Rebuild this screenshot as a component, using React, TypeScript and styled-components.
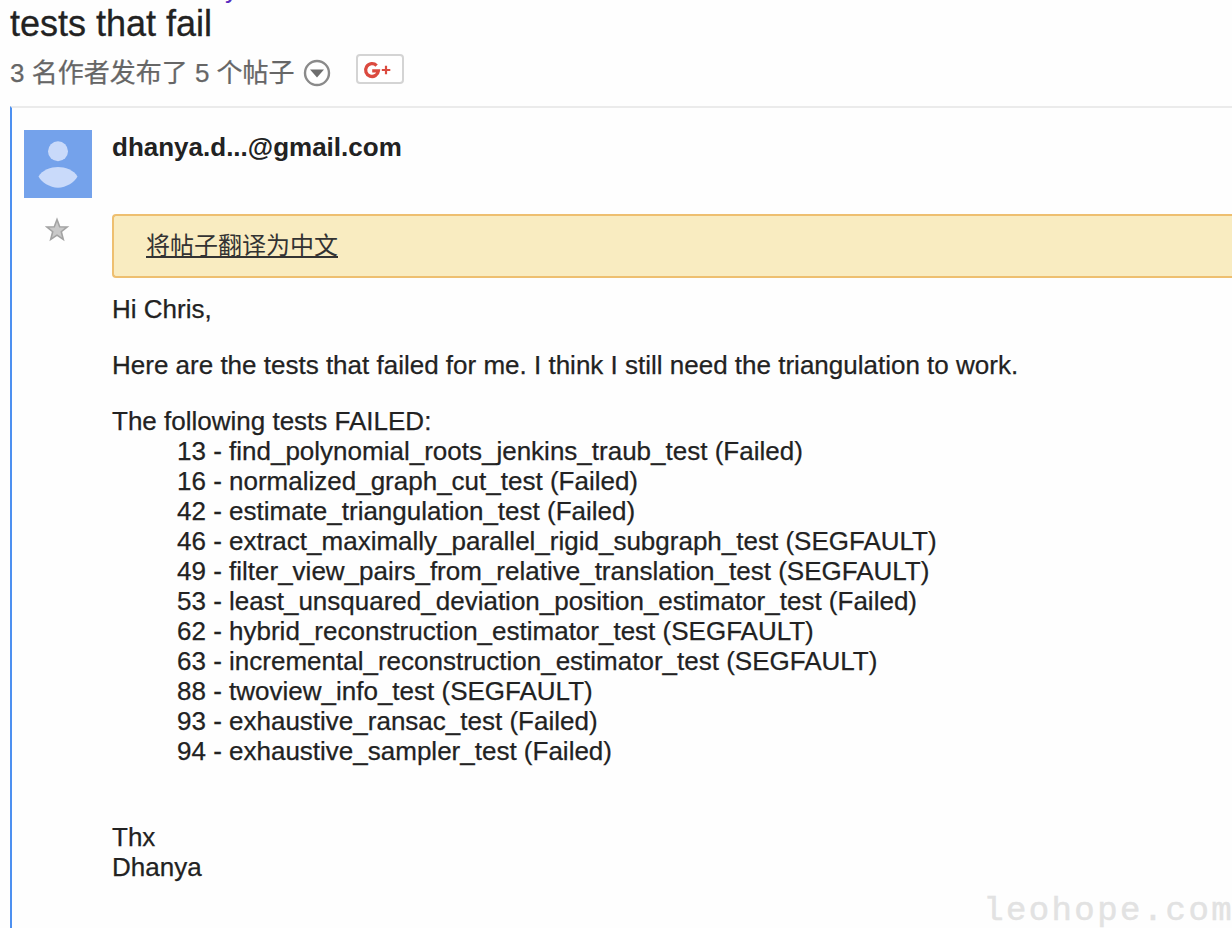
import React from "react";
import styled, { createGlobalStyle } from "styled-components";

const Global = createGlobalStyle`
  html, body { margin: 0; background: #fefefe; }
  body {
    height: 928px;
    overflow: hidden;
    color: #222;
    font-family: "Liberation Sans", Arial, "Noto Sans CJK SC", sans-serif;
    font-size: 26px;
    line-height: 30px;
  }
`;

const Page = styled.div`
  position: relative;
  display: flex;
  flex-direction: column;
  width: 1232px;
  height: 928px;
  overflow: hidden;
`;

const Crumb = styled.div`
  height: 4px;
  padding-left: 225px;
  display: flex;
  align-items: flex-end;
  overflow: hidden;
  color: #5a2bc0;
`;

const Title = styled.h1`
  margin: 0;
  padding-left: 10px;
  height: 40px;
  font-size: 36px;
  font-weight: 400;
  line-height: 40px;
  -webkit-text-stroke: 0.3px #222;
`;

const Meta = styled.div`
  display: flex;
  align-items: center;
  height: 62px;
  padding: 0 0 4px 10px;
  box-sizing: border-box;
  color: #666;
  -webkit-text-stroke: 0.25px #666;
`;

const Count = styled.span`
  white-space: pre;
  width: 293px;
`;

const PlusButton = styled.button`
  display: flex;
  align-items: center;
  width: 48px;
  height: 30px;
  margin: 0 0 8px 25px;
  padding: 1px 0 0 5px;
  box-sizing: border-box;
  border: 2px solid #d4d4d4;
  border-radius: 4px;
  background: #fff;
`;

const Thread = styled.main`
  display: flex;
  flex: 1;
  margin-left: 10px;
  padding-top: 22px;
  border-top: 2px solid #ebebeb;
  border-left: 2px solid #4d90f0;
`;

const Side = styled.aside`
  display: flex;
  flex-direction: column;
  align-items: center;
  gap: 19px;
  width: 68px;
  margin: 0 20px 0 12px;
`;

const Message = styled.article`
  flex: 1;
`;

const Author = styled.div`
  height: 84px;
  padding-top: 2px;
  box-sizing: border-box;
  font-weight: 700;
`;

const TranslateBar = styled.div`
  display: flex;
  align-items: center;
  height: 64px;
  box-sizing: border-box;
  padding-left: 32px;
  border: 2px solid #eebf70;
  border-right: 0;
  border-radius: 4px 0 0 4px;
  background: #f9ecc1;
`;

const TranslateLink = styled.a`
  color: #333;
  font-size: 24px;
  text-decoration: underline;
  text-decoration-thickness: 2px;
  text-underline-offset: 2px;
  text-decoration-skip-ink: none;
`;

const Body = styled.div`
  padding-top: 16px;
  -webkit-text-stroke: 0.25px #222;
`;

const Paragraph = styled.p<{ $gap?: number }>`
  margin: 0 0 ${(p) => p.$gap ?? 26}px;
  white-space: nowrap;
`;

const TestList = styled.ul`
  margin: 0 0 56px;
  padding: 0 0 0 65px;
  list-style: none;
  white-space: nowrap;
`;

const Watermark = styled.div`
  position: absolute;
  right: -2px;
  bottom: -3px;
  color: #e2e2e2;
  font: 34px/40px "Liberation Mono", monospace;
  letter-spacing: 2.4px;
  -webkit-text-stroke: 0.5px #e2e2e2;
`;

const tests = [
  "13 - find_polynomial_roots_jenkins_traub_test (Failed)",
  "16 - normalized_graph_cut_test (Failed)",
  "42 - estimate_triangulation_test (Failed)",
  "46 - extract_maximally_parallel_rigid_subgraph_test (SEGFAULT)",
  "49 - filter_view_pairs_from_relative_translation_test (SEGFAULT)",
  "53 - least_unsquared_deviation_position_estimator_test (Failed)",
  "62 - hybrid_reconstruction_estimator_test (SEGFAULT)",
  "63 - incremental_reconstruction_estimator_test (SEGFAULT)",
  "88 - twoview_info_test (SEGFAULT)",
  "93 - exhaustive_ransac_test (Failed)",
  "94 - exhaustive_sampler_test (Failed)",
];

const MenuIcon = () => (
  <svg width="28" height="28" viewBox="0 0 28 28">
    <circle cx="14" cy="14" r="12" fill="#fff" stroke="#8a8a8a" strokeWidth="2.4" />
    <path d="M7 10.5h14l-7 8z" fill="#6d6d6d" />
  </svg>
);

const PlusIcon = () => (
  <svg width="30" height="18" viewBox="0 0 30 18">
    <path d="M13.6 4.6A6.4 6.4 0 1 0 15.4 9.8H9.2" fill="none" stroke="#db4a3f" strokeWidth="3.3" />
    <path d="M23 4.7v8.500M18.800 9h8.500" stroke="#db4a3f" strokeWidth="2.200" />
  </svg>
);

const Avatar = () => (
  <svg width="68" height="68" viewBox="0 0 68 68">
    <path d="M0 0h68v68H0z" fill="#74a2eb" />
    <circle cx="34" cy="21.3" r="10" fill="#c9dafa" />
    <path d="M14.5 46.5C18 40 27 37 34 37s16 3 19.5 9.5C51 52 42 57.700 34 57.700S17 52 14.500 46.500z" fill="#c9dafa" />
  </svg>
);

const Star = () => (
  <svg width="26" height="26" viewBox="0 0 26 26">
    <path d="M12 2.5l2.7 7.2 7.5.3-5.9 4.700 2 7.800-6.300-4.300-6.300 4.300 2-7.800L1.800 10l7.500-.3z" fill="#c9c9c9" stroke="#a3a3a3" strokeWidth="1.600" />
  </svg>
);

export default function App() {
  return (
    <Page>
      <Global />
      <Crumb>y</Crumb>
      <Title>tests that fail</Title>
      <Meta>
        <Count>3 名作者发布了 5 个帖子</Count>
        <MenuIcon />
        <PlusButton aria-label="G+">
          <PlusIcon />
        </PlusButton>
      </Meta>
      <Thread>
        <Side>
          <Avatar />
          <Star />
        </Side>
        <Message>
          <Author>dhanya.d...@gmail.com</Author>
          <TranslateBar>
            <TranslateLink>将帖子翻译为中文</TranslateLink>
          </TranslateBar>
          <Body>
            <Paragraph>Hi Chris,</Paragraph>
            <Paragraph>
              Here are the tests that failed for me. I think I still need the triangulation to work.
            </Paragraph>
            <Paragraph $gap={0}>The following tests FAILED:</Paragraph>
            <TestList>
              {tests.map((t) => (
                <li key={t}>{t}</li>
              ))}
            </TestList>
            <Paragraph $gap={0}>Thx</Paragraph>
            <Paragraph $gap={0}>Dhanya</Paragraph>
          </Body>
        </Message>
      </Thread>
      <Watermark>leohope.com</Watermark>
    </Page>
  );
}
